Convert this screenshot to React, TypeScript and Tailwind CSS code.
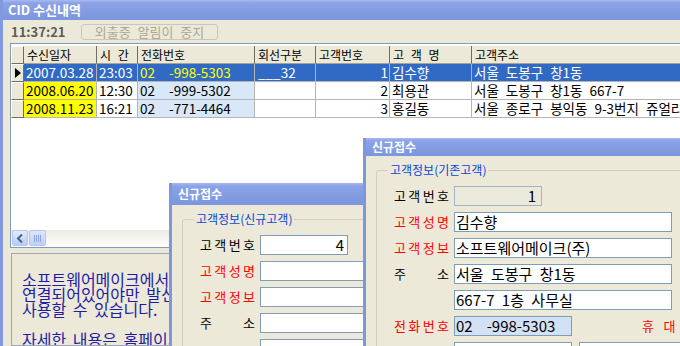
import React from 'react';

type Row = {
  date: string;
  time: string;
  area: string;
  num: string;
  line: string;
  no: string;
  name: string;
  addr: string;
  sel?: boolean;
};

const rows: Row[] = [
  { date: '2007.03.28', time: '23:03', area: '02', num: '-998-5303', line: '___32', no: '1', name: '김수향', addr: '서울 도봉구 창1동', sel: true },
  { date: '2008.06.20', time: '12:30', area: '02', num: '-999-5302', line: '', no: '2', name: '최용관', addr: '서울 도봉구 창1동 667-7' },
  { date: '2008.11.23', time: '16:21', area: '02', num: '-771-4464', line: '', no: '3', name: '홍길동', addr: '서울 종로구 봉익동 9-3번지 쥬얼리빌딩' },
];

const cols = 'grid grid-cols-[13px_73px_41px_117px_61px_74px_82px_320px]';
const cell = 'h-[18px] border-r border-b border-[#b4b4b4] px-[2px] leading-[17px] whitespace-nowrap';
const titleBg = 'bg-[linear-gradient(to_bottom,#a8b9ef_0px,#8ba2e6_3px,#7b96df_100%)]';

const Indicator = ({ active }: { active?: boolean }) => (
  <div className="h-[18px] bg-[#ece9d8] border-t border-l border-white border-r border-b border-r-[#716f64] border-b-[#716f64] flex items-center justify-center">
    {active && (
      <svg width="6" height="10" viewBox="0 0 6 10">
        <polygon points="0,0 6,5 0,10" fill="#000" />
      </svg>
    )}
  </div>
);

const Label = ({ text, red }: { text: string; red?: boolean }) => (
  <div className={`w-[55px] shrink-0 flex justify-between text-[13px] leading-[20px] ${red ? 'text-[#f00]' : 'text-black'}`}>
    {text.replace(/ /g, '').split('').map((c, i) => (
      <span key={i}>{c}</span>
    ))}
  </div>
);

const Input = ({ className, children }: { className: string; children?: React.ReactNode }) => (
  <div className={`h-[20px] shrink-0 border border-[#7f9db9] px-[1px] text-[15px] leading-[18px] whitespace-nowrap [word-spacing:4px] ${className}`}>
    {children}
  </div>
);

const Dialog = ({ className, legend, children }: { className: string; legend: string; children: React.ReactNode }) => (
  <div className={`absolute w-[440px] bg-[#ece9d8] border-l-[3px] border-[#7d97df] flex flex-col ${className}`}>
    <div className={`h-[22px] ${titleBg} flex items-center pl-[6px] text-white font-bold text-[12px]`}>신규접수</div>
    <div className="pt-[7px] pl-[10px]">
      <fieldset className="border border-[#d0d0bf] rounded-[3px] pt-[9px] pb-[20px]">
        <legend className="ml-[11px] px-[2px] text-[12px] leading-[14px] text-[#0a46d8]">{legend}</legend>
        <div className="pl-[17px] flex flex-col gap-[6px]">{children}</div>
      </fieldset>
    </div>
  </div>
);

export default function App() {
  return (
    <div className="relative w-[680px] h-[346px] overflow-hidden bg-[#ece9d8] font-['Noto_Sans_CJK_KR',sans-serif]">
      {/* main window */}
      <div className="w-[780px] h-full flex flex-col border-l-[3px] border-[#8298e0]">
        <div className={`h-[20px] shrink-0 ${titleBg} flex items-center pl-[5px] text-white font-bold text-[13px]`}>CID 수신내역</div>

        <div className="h-[23px] shrink-0 flex items-center pl-[8px]">
          <span className="w-[70px] text-[13px] font-bold text-[#5c5c5c]">11:37:21</span>
          <div className="w-[137px] h-[16px] rounded-[3px] border border-[#c9c7ba] flex items-center justify-center text-[13px] leading-none text-[#aca899] [word-spacing:4px]">
            외출중 알림이 중지
          </div>
        </div>

        {/* grid */}
        <div className="ml-[7px] h-[205px] shrink-0 flex flex-col border border-[#7f9db9] bg-white pt-[2px] pb-[1px] overflow-hidden">
          <div className={`${cols} text-[12px] text-black`}>
            <Indicator />
            {['수신일자', '시 간', '전화번호', '회선구분', '고객번호', '고 객 명', '고객주소'].map((h) => (
              <div key={h} className="h-[18px] bg-[#ece9d8] border-r border-b border-r-[#716f64] border-b-[#a5a396] pl-[3px] leading-[17px] whitespace-nowrap [word-spacing:4px]">
                {h}
              </div>
            ))}
          </div>
          {rows.map((r) => (
            <div key={r.no} className={`${cols} text-[13.5px] ${r.sel ? 'bg-[#316ac5] text-white' : 'text-black'}`}>
              <Indicator active={r.sel} />
              <div className={`${cell} ${r.sel ? '' : 'bg-[#ffff00]'}`}>{r.date}</div>
              <div className={`${cell} ${r.sel ? '' : 'bg-white'}`}>{r.time}</div>
              <div className={`${cell} ${r.sel ? 'text-[#ffff00]' : 'bg-[#d8e8f8]'}`}>
                {r.area}
                <span className="ml-[14px]">{r.num}</span>
              </div>
              <div className={`${cell} pl-[3px]`}>{r.line}</div>
              <div className={`${cell} text-right pr-[1px]`}>{r.no}</div>
              <div className={cell}>{r.name}</div>
              <div className={`${cell} [word-spacing:4px]`}>{r.addr}</div>
            </div>
          ))}
          <div className="flex-1" />
          <div className="h-[16px] shrink-0 flex items-center bg-[linear-gradient(to_bottom,#ecebe3,#fdfdfb)]">
            <div className="ml-[1px] w-[16px] h-[16px] rounded-[2px] border border-[#b3c5f0] bg-[linear-gradient(to_bottom,#e2eafd,#b9ccf7)] flex items-center justify-center">
              <svg width="8" height="9" viewBox="0 0 8 9">
                <polyline points="6,0.5 2,4.5 6,8.5" fill="none" stroke="#4d6185" strokeWidth="2" />
              </svg>
            </div>
            <div className="ml-[1px] w-[17px] h-[16px] rounded-[2px] border border-[#b3c5f0] bg-[linear-gradient(to_bottom,#dde7fd,#bfd0f8)] flex items-center justify-center gap-[1px]">
              <span className="w-[1px] h-[7px] bg-[#8ca4e6]" />
              <span className="w-[1px] h-[7px] bg-[#8ca4e6]" />
              <span className="w-[1px] h-[7px] bg-[#8ca4e6]" />
              <span className="w-[1px] h-[7px] bg-[#8ca4e6]" />
            </div>
          </div>
        </div>

        {/* info panel (its right part lies under the dialog) */}
        <div className="mt-[5px] ml-[8px] w-[160px] flex-1 overflow-hidden border border-[#9aa8bd] pt-[18px] pl-[10px] text-[16px] leading-[15px] text-[#1c1ca6] whitespace-nowrap [word-spacing:3px]">
          <p>소프트웨어메이크에서 제공하는 CID 장치가</p>
          <p>연결되어있어야만 발신자 표시 기능을</p>
          <p>사용할 수 있습니다.</p>
          <p>&nbsp;</p>
          <p>자세한 내용은 홈페이지를 참고하세요.</p>
        </div>
      </div>

      {/* 신규고객 dialog */}
      <Dialog className="left-[169px] top-[183px] h-[200px]" legend="고객정보(신규고객)">
        <div className="flex items-center gap-[5px]">
          <Label text="고객번호" />
          <Input className="w-[88px] bg-white text-right pr-[3px]">4</Input>
        </div>
        <div className="flex items-center gap-[5px]">
          <Label text="고객성명" red />
          <Input className="w-[218px] bg-white" />
        </div>
        <div className="flex items-center gap-[5px]">
          <Label text="고객정보" red />
          <Input className="w-[218px] bg-white" />
        </div>
        <div className="flex items-center gap-[5px]">
          <Label text="주 소" />
          <Input className="w-[218px] bg-white" />
        </div>
        <div className="flex items-center gap-[5px]">
          <div className="w-[55px] shrink-0" />
          <Input className="w-[218px] bg-white" />
        </div>
      </Dialog>

      {/* 기존고객 dialog */}
      <Dialog className="left-[363px] top-[138px] h-[240px]" legend="고객정보(기존고객)">
        <div className="flex items-center gap-[5px]">
          <Label text="고객번호" />
          <Input className="w-[88px] bg-[#ebeadb] border-[#a3b2c6] text-right pr-[5px]">1</Input>
        </div>
        <div className="flex items-center gap-[5px]">
          <Label text="고객성명" red />
          <Input className="w-[218px] bg-white">김수향</Input>
        </div>
        <div className="flex items-center gap-[5px]">
          <Label text="고객정보" red />
          <Input className="w-[218px] bg-white">소프트웨어메이크(주)</Input>
        </div>
        <div className="flex items-center gap-[5px]">
          <Label text="주 소" />
          <Input className="w-[218px] bg-white">서울 도봉구 창1동</Input>
        </div>
        <div className="flex items-center gap-[5px]">
          <div className="w-[55px] shrink-0" />
          <Input className="w-[218px] bg-white">667-7 1층 사무실</Input>
        </div>
        <div className="flex items-center gap-[5px]">
          <Label text="전화번호" red />
          <Input className="w-[118px] bg-[#d3e1f5]">
            02<span className="ml-[14px]">-998-5303</span>
          </Input>
          <div className="ml-[65px]">
            <Label text="휴 대 폰" red />
          </div>
        </div>
        <div className="flex items-center gap-[5px]">
          <div className="w-[55px] shrink-0" />
          <Input className="w-[118px] bg-white" />
          <Input className="ml-[2px] w-[118px] bg-white" />
        </div>
      </Dialog>
    </div>
  );
}
